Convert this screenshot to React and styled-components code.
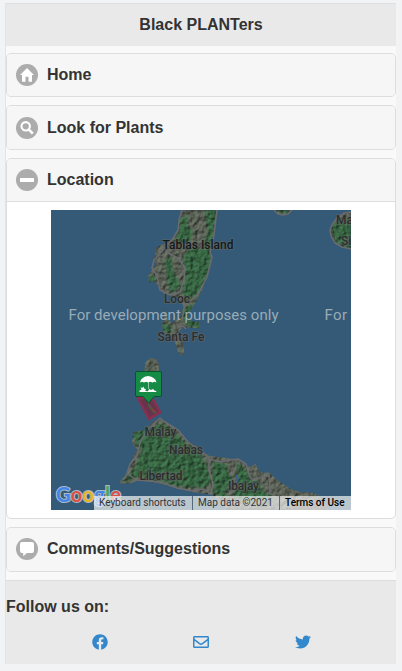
import React from 'react';
import styled, { createGlobalStyle } from 'styled-components';

const GlobalStyle = createGlobalStyle`
  * { box-sizing: border-box; }
  body {
    margin: 0;
    background: #f1f3f4;
    color: #333;
    font: bold 16px/20px "Liberation Sans", Arial, sans-serif;
  }
`;

const Page = styled.div`
  width: 391px;
  height: 661px;
  margin: 3px 0 0 5px;
  border-left: 1px solid #e3e5e5;
  background: #f9f9f9;
  display: flex;
  flex-direction: column;
`;

const Header = styled.header`
  height: 43px;
  flex: none;
  border-top: 1px solid #dfdfdf;
  background: #e9e9e9;
  display: flex;
  align-items: center;
  justify-content: center;
  h1 { font-size: 16px; line-height: 20px; margin: 0; }
`;

const Sections = styled.main`
  padding-top: 7px;
  height: 534px;
  flex: none;
  display: flex;
  flex-direction: column;
  gap: 8px;
`;

const Section = styled.section`
  flex: none;
  height: ${(p) => p.$height}px;
  border: 1px solid #ddd;
  border-radius: 5px;
  background: #fff;
  overflow: hidden;
`;

const SectionHeading = styled.h2`
  margin: 0;
  height: ${(p) => (p.$open ? '43px' : '100%')};
  border-bottom: ${(p) => (p.$open ? '1px solid #ddd' : '0')};
  padding: ${(p) => p.$shift || 0}px 0 ${(p) => (p.$raised ? 1 : 0)}px 9px;
  display: flex;
  align-items: center;
  gap: 9px;
  background: #f6f6f6;
  font-size: 16px;
  line-height: 20px;
  svg { display: block; flex: none; }
  span { margin-top: ${(p) => (p.$raised ? -1 : 0)}px; }
`;

const MapFrame = styled.div`
  width: 300px;
  height: 300px;
  margin: 8px auto 0 44px;
  display: grid;
  overflow: hidden;
  font-weight: 400;
  > * { grid-area: 1 / 1; }
`;

const Attribution = styled.div`
  align-self: end;
  justify-self: end;
  z-index: 1;
  width: 257px;
  height: 14px;
  display: flex;
  font: 10px/14px Roboto, Arial, sans-serif;
  color: #222;
`;

const Credit = styled.span`
  width: ${(p) => p.$width}px;
  padding-left: 5px;
  white-space: nowrap;
  background: rgba(245, 245, 245, 0.7);
  border-left: ${(p) => (p.$divided ? '1px solid #536b7b' : '0')};
  color: ${(p) => (p.$strong ? '#000' : '#333')};
  font-weight: ${(p) => (p.$strong ? 500 : 400)};
`;

const Footer = styled.footer`
  height: 84px;
  border-top: 1px solid #ddd;
  background: #e9e9e9;
  padding-top: 16px;
  p { margin: 0; }
`;

const Social = styled.nav`
  display: grid;
  grid-template-columns: 16px 16px 17px;
  column-gap: 85px;
  margin: 17px 0 0 86px;
  svg { display: block; width: 16px; height: 16px; fill: #3388cc; justify-self: end; }
`;

const glyphs = {
  home: <path fill="#fff" d="M11 4 4 11h2v6.700h3.500v-5h3v5H16V11h2z" />,
  search: (
    <g fill="none" stroke="#fff">
      <circle cx="9.7" cy="9.3" r="4.2" strokeWidth="2.1" />
      <path d="m12.800 12.600 4 4.100" strokeWidth="2.6" />
    </g>
  ),
  minus: <path fill="#fff" d="M4 9h14v4H4z" />,
  comment: <path fill="#fff" d="M6 4h10q2 0 2 2v7q0 2-2 2h-5l-3.800 3.200V15H6q-2 0-2-2V6q0-2 2-2z" />,
};

const Disc = ({ name }) => (
  <svg width="22" height="22" viewBox="0 0 22 22" aria-hidden="true">
    <circle cx="11" cy="11" r="11" fill="#acacac" />
    {glyphs[name]}
  </svg>
);

const land = [
  'M131 0 128 10 127 20 121 30 112 34 105 38 103 50 105 55 97 66 98 73 102 71 107 75 109 80 114 84 126 87 132 95 131 105 121 113 117 109 114 98 111 115 112 122 119 126 124 132 127 142 131 146 133 142 132 133 127 123 132 117 142 118 149 118 148 112 139 111 137 105 146 90 151 80 156 67 161 47 159 42 163 25 165 8 166 0Z',
  'M223 0 227 4 232 5 237 4 241 0Z',
  'M300 2 293 3 286 8 281 15 279 20 280 26 284 33 291 37 300 39Z',
  'M94 153 99 148 106 149 108 155 108 166 93 166Z',
  'M109 208 114 212 127 220 137 232 147 237 152 242 159 246 176 248 187 250 197 257 205 254 207 260 212 263 217 262 229 272 240 279 249 282 264 283 268 286 277 300 177 300 162 285 142 282 126 278 106 273 89 270 77 274 68 273 76 263 82 247 86 240 81 233 82 222 94 220 102 212Z',
].join('');

const hills = [
  'M129 9 137 5 136 16 143 22 137 33 123 32 128 20ZM154 0 166 0 163 20 159 42 161 47 156 67 147 84 136 92 131 82 135 65 132 48 139 37 151 39 157 22Z',
  'M97 67 103 65 106 71 98 73ZM114 51 120 45 122 61 130 76 120 84 116 68ZM132 98 144 93 136 109 148 112 149 118 137 116 131 108ZM112 112 121 117 119 125 112 120Z',
  'M223 0H241L234 4ZM282 12 294 9 300 12V39L286 34 281 22Z',
  'M82 223 99 219 110 213 119 218 133 231 151 246 157 259 160 272 153 278 126 276 108 271 88 266 72 273 85 256 91 240 85 235Z',
  'M162 251 175 254 177 263 182 269 174 282 178 291 163 284 161 268ZM186 252 197 262 199 270 208 272 212 282 222 287 219 294 182 289 187 271Z',
];

const labels = [
  ['Tablas Island', 147, 39, 71, '#151819'],
  ['Looc', 126, 93, 26],
  ['Santa Fe', 130, 131, 47],
  ['Malay', 109.5, 225.5, 32],
  ['Nabas', 135, 243.5, 34],
  ['Libertad', 110, 270, 43],
  ['Ibajay', 192.5, 280, 31],
];

const MapArt = () => (
  <svg width="300" height="300" viewBox="0 0 300 300">
    <defs>
      <clipPath id="landClip"><path d={land} /></clipPath>
      <filter id="relief" x="0" y="0" width="300" height="300" filterUnits="userSpaceOnUse" colorInterpolationFilters="sRGB">
        <feGaussianBlur in="SourceGraphic" stdDeviation="1" result="base" />
        <feTurbulence type="fractalNoise" baseFrequency="0.22" numOctaves="3" seed="8" result="noise" />
        <feColorMatrix in="noise" type="matrix" values="0 0 0 0 0 0 0 0 0 0 0 0 0 0 0 1 0 0 0 0" result="height" />
        <feDiffuseLighting in="height" surfaceScale="2" lightingColor="#fff" result="light">
          <feDistantLight azimuth="225" elevation="50" />
        </feDiffuseLighting>
        <feComposite in="base" in2="light" operator="arithmetic" k1="0.95" k2="0.26" k3="0" k4="0" />
      </filter>
    </defs>
    <rect width="300" height="300" fill="#345a77" />
    <g clipPath="url(#landClip)">
      <g filter="url(#relief)">
        <rect width="300" height="300" fill="#5c6358" />
        {hills.map((d) => <path key={d} d={d} fill="#386643" />)}
      </g>
      <path d="M136 241 140 253 142 269M147 257 152 265" fill="none" stroke="#203f2b" strokeWidth="5" opacity=".24" />
    </g>
    <g fill="none" stroke="#6a6b6f" strokeWidth="1.5" strokeLinejoin="round">
      <path d="M131 0 128 10 127 20 121 30 113 39 103 50 101 58 106 66 109 80 119 85 129 82 133 70 134 58 128 49 121 45 114 41M166 0 165 8 163 25 159 42 161 47 156 67 147 84 134 95 132 104 131 111M126 117 132 116 135 119M127 123 125 128" />
      <path d="M223 0 227 4 232 5 237 4 241 0M300 2 293 3 286 8 281 15 279 20 280 26 284 33 291 37 300 39" />
      <path d="M109 208 104 213 96 221 90 230 86 245 79 254 76 263 85 270 110 272 126 278 142 281 152 279 160 284 162 273 158 260 158 248 148 240 137 232 127 220 114 212 109 208M158 249 169 252 178 250 187 249 195 254 199 267 202 270 218 265 219 283 228 289" />
    </g>
    <path d="M185 265 187 269 185 273" fill="none" stroke="#37658b" strokeWidth="2" />
    <path d="M87 188 98 209 109 202 101 188Z" fill="#68334d" stroke="#892f50" strokeWidth="2.5" />
    <path d="m97 192 6 8 3 4-4-1-5-7Z" fill="#555447" />
    <path d="m101 199 4 3" stroke="#963d35" strokeWidth="1.5" />
    <path d="M86 161.500H109Q110.500 161.500 110.500 163V185Q110.500 186.500 109 186.500H103L97.500 193 92 186.500H86Q84.500 186.500 84.500 185V163Q84.500 161.500 86 161.500Z" fill="#168b46" stroke="#07552c" />
    <path d="M89 172.500q.8-5.500 8-6.500 7.500 1 8.500 6.500l-2-.8-2 .8-2-.8-2.500.8-2-.8-2 .8-2-.8Z" fill="#fff" />
    <path d="M97.500 172v7" stroke="#c6e2d1" strokeWidth=".7" />
    <path d="M88.500 182v-1.500l2-1-1-2 2 .2 1-1.200.5 2 2 .5-1 1.500 2.500 1 2-2.500 1.500 1 2-1 1.500 1.500 1.500.5.5 1Z" fill="#fff" />
    <g fontFamily="Roboto, Arial, sans-serif" fontSize="12" fontWeight="500" stroke="#686b69" strokeWidth="1.6" strokeOpacity=".6" paintOrder="stroke">
      {labels.map(([text, x, y, width, fill]) => (
        <text key={text} x={x} y={y} textAnchor="middle" textLength={width} fill={fill || '#2b2d2e'}>{text}</text>
      ))}
      <text x="285" y="14" fill="#2b2d2e">Ma</text>
      <text x="290" y="35" fill="#2b2d2e">Si</text>
      <text x="241" y="303" textLength="35" fill="#5a4545">Kalibo</text>
    </g>
    <g fontFamily="Roboto, Arial, sans-serif" fontSize="15" fill="#98abb8">
      <text x="17.5" y="110" textLength="210">For development purposes only</text>
      <text x="273.5" y="110" textLength="22.5">For</text>
    </g>
    <text x="5" y="292" fontFamily="Lato, sans-serif" fontSize="20" fontWeight="700" textLength="65" stroke="#d5dce3" strokeOpacity=".75" strokeWidth="2" paintOrder="stroke">
      <tspan fill="#4285e8">G</tspan><tspan fill="#dc5146">o</tspan><tspan fill="#e8b421">o</tspan><tspan fill="#4285e8">g</tspan><tspan fill="#43a75b">l</tspan><tspan fill="#dc5146">e</tspan>
    </text>
  </svg>
);

export default function App() {
  return (
    <>
      <GlobalStyle />
      <Page>
        <Header><h1>Black PLANTers</h1></Header>
        <Sections>
          <Section $height={44}>
            <SectionHeading><Disc name="home" /><span>Home</span></SectionHeading>
          </Section>
          <Section $height={45}>
            <SectionHeading $shift={1}><Disc name="search" /><span>Look for Plants</span></SectionHeading>
          </Section>
          <Section $height={361}>
            <SectionHeading $open><Disc name="minus" /><span>Location</span></SectionHeading>
            <MapFrame>
              <MapArt />
              <Attribution>
                <Credit $width={98}>Keyboard shortcuts</Credit>
                <Credit $width={87} $divided>Map data ©2021</Credit>
                <Credit $width={72} $divided $strong>Terms of Use</Credit>
              </Attribution>
            </MapFrame>
          </Section>
          <Section $height={45}>
            <SectionHeading $raised><Disc name="comment" /><span>Comments/Suggestions</span></SectionHeading>
          </Section>
        </Sections>
        <Footer>
          <p>Follow us on:</p>
          <Social aria-label="Social links">
            <svg viewBox="0 0 512 512"><path d="M504 256C504 119 393 8 256 8S8 119 8 256c0 123.780 90.690 226.380 209.250 245V327.690h-63V256h63v-54.640c0-62.150 37-96.480 93.670-96.480 27.140 0 55.520 4.840 55.520 4.840v61h-31.280c-30.800 0-40.410 19.120-40.410 38.730V256h68.780l-11 71.690h-57.780V501C413.310 482.380 504 379.780 504 256z" /></svg>
            <svg viewBox="0 0 512 512"><path d="M464 64H48C21.490 64 0 85.490 0 112v288c0 26.510 21.490 48 48 48h416c26.510 0 48-21.490 48-48V112c0-26.510-21.490-48-48-48zm0 48v40.805c-22.422 18.259-58.168 46.651-134.587 106.490-16.841 13.247-50.201 45.072-73.413 44.701-23.208.375-56.579-31.459-73.413-44.701C106.180 199.465 70.425 171.067 48 152.805V112h416zM48 400V214.398c22.914 18.251 55.409 43.862 104.938 82.646 21.857 17.205 60.134 55.186 103.062 54.955 42.717.231 80.509-37.199 103.053-54.947 49.528-38.783 82.032-64.401 104.947-82.653V400H48z" /></svg>
            <svg viewBox="0 0 512 512"><path d="M459.370 151.716c.325 4.548.325 9.097.325 13.645 0 138.720-105.583 298.558-298.558 298.558-59.452 0-114.680-17.219-161.137-47.106 8.447.974 16.568 1.299 25.340 1.299 49.055 0 94.213-16.568 130.274-44.832-46.132-.975-84.792-31.188-98.112-72.772 6.498.974 12.995 1.624 19.818 1.624 9.421 0 18.843-1.300 27.614-3.573-48.081-9.747-84.143-51.980-84.143-102.985v-1.299c13.969 7.797 30.214 12.670 47.431 13.319-28.264-18.843-46.781-51.005-46.781-87.391 0-19.492 5.197-37.360 14.294-52.954 51.655 63.675 129.300 105.258 216.365 109.807-1.624-7.797-2.599-15.918-2.599-24.040 0-57.828 46.782-104.934 104.934-104.934 30.213 0 57.502 12.670 76.670 33.137 23.715-4.548 46.456-13.320 66.599-25.340-7.798 24.366-24.366 44.833-46.132 57.827 21.117-2.273 41.584-8.122 60.426-16.243-14.292 20.791-32.161 39.308-52.628 54.253z" /></svg>
          </Social>
        </Footer>
      </Page>
    </>
  );
}
